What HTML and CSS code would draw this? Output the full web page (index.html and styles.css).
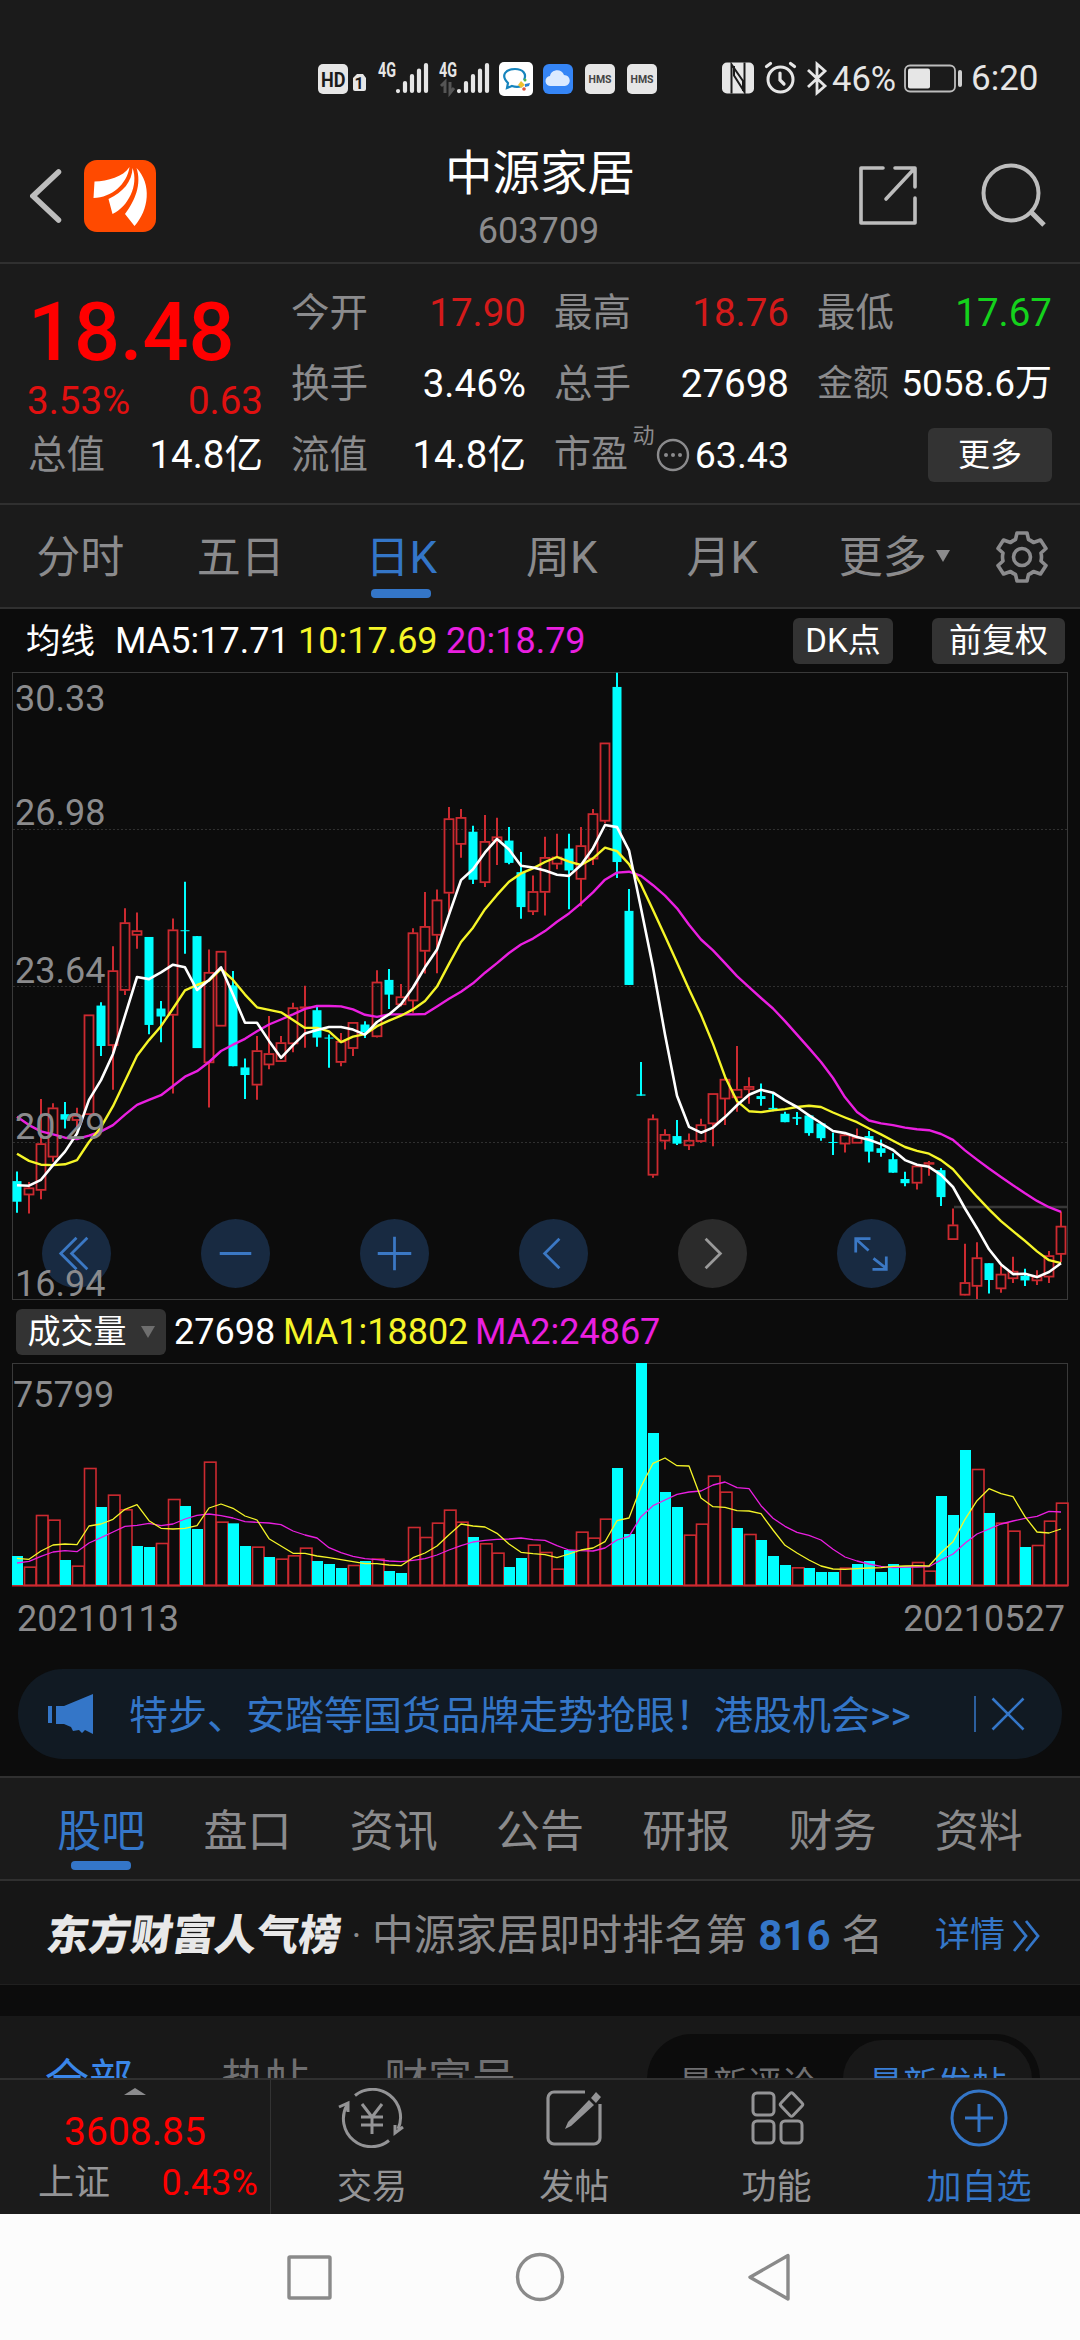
FILE: index.html
```html
<!DOCTYPE html>
<html lang="zh-CN">
<head>
<meta charset="utf-8">
<title>中源家居 603709</title>
<link rel="stylesheet" href="styles.css">
</head>
<body>
<div class="screen">

  <div class="status">
    <svg class="status-left" width="340" height="36" viewBox="318 61 340 36">
      <rect x="318" y="64" width="30" height="30" rx="5" fill="#e6e6e6"/>
      <text x="321" y="86.500" font-size="20" font-weight="700" fill="#1b1b1b" textLength="24.500" lengthAdjust="spacingAndGlyphs">HD</text>
      <path d="M357 74h6l3 4v11a2 2 0 0 1-2 2h-9a2 2 0 0 1-2-2V78z" fill="#e6e6e6"/>
      <text x="359" y="88.500" font-size="16" font-weight="700" fill="#1b1b1b" text-anchor="middle">1</text>
      <g fill="#e6e6e6" font-size="20" font-weight="700">
        <text x="378" y="77" textLength="18" lengthAdjust="spacingAndGlyphs">4G</text>
        <text x="439" y="77" textLength="18" lengthAdjust="spacingAndGlyphs">4G</text>
      </g>
      <g stroke="#e6e6e6" stroke-width="4.200" stroke-linecap="round">
        <path d="M398 91v.1M405 83v8M412 76v15M419 70.500v20.500M426 65v26"/>
        <path d="M459 91v.1M466 83v8M473 76v15M480 70.500v20.500M487 65v26"/>
      </g>
      <path d="M441 86l4-4v11M450 82v11l4-5" stroke="#555" stroke-width="3" fill="none"/>
      <rect x="499" y="62" width="34" height="34" rx="5" fill="#fff"/>
      <path d="M522 86c-3 1-7 1-10 0l-5 2 1-5c-8-8-2-14 7-14 8 0 12 5 9 11" fill="none" stroke="#1684bd" stroke-width="2.200"/>
      <path d="M521 81l4 4-4 3-3-3z" fill="#f2c12e"/><path d="M525 84l5-1-1 3-4 1z" fill="#2b7fd0"/><circle cx="524" cy="89" r="1.800" fill="#e0533a"/><circle cx="525" cy="80" r="1.500" fill="#4fb54b"/>
      <rect x="543" y="64" width="30" height="30" rx="6" fill="#3585f6"/>
      <path d="M551 86a5 5 0 0 1-1-10c1-7 12-8 14-1 7 0 8 10 1 11z" fill="#dbeaff"/>
      <rect x="585" y="64" width="30" height="30" rx="5" fill="#e6e6e6"/>
      <rect x="627" y="64" width="30" height="30" rx="5" fill="#e6e6e6"/>
      <g font-size="10" font-weight="700" fill="#444">
        <text x="588.500" y="82.500" textLength="23" lengthAdjust="spacingAndGlyphs">HMS</text>
        <text x="630.500" y="82.500" textLength="23" lengthAdjust="spacingAndGlyphs">HMS</text>
      </g>
    </svg>
    <svg class="status-mid" width="108" height="36" viewBox="721 61 108 36">
      <path d="M727 62.500h22a5 5 0 0 1 5 5v21a5 5 0 0 1-5 5h-22a5 5 0 0 1-5-5v-21a5 5 0 0 1 5-5z" fill="#e6e6e6"/>
      <path d="M731.500 93.500V64.500L743 81v10M744.500 62.500V92L734 75.500V66" stroke="#1b1b1b" stroke-width="2" fill="none"/>
      <circle cx="780.500" cy="79.500" r="12.500" fill="none" stroke="#e6e6e6" stroke-width="3"/>
      <path d="M780 73v7l4 4M766.500 66.500l4-3M794.500 66.500l-4-3" stroke="#e6e6e6" stroke-width="3.200" fill="none" stroke-linecap="round"/>
      <path d="M808 70l17 16-8 7V64l8 7-17 16" stroke="#e6e6e6" stroke-width="2.800" fill="none"/>
    </svg>
    <span class="battery-text">46%</span>
    <svg class="battery" width="60" height="36" viewBox="903 61 60 36">
      <rect x="905" y="65.500" width="50" height="26" rx="5" fill="none" stroke="#bdbdbd" stroke-width="1.800"/>
      <rect x="908" y="68.500" width="22" height="20" rx="2" fill="#e6e6e6"/>
      <path d="M960 72v13" stroke="#d0d0d0" stroke-width="4" stroke-linecap="round"/>
    </svg>
    <span class="clock">6:20</span>
  </div>

  <header class="header">
    <div class="header-side">
      <svg width="32" height="56" viewBox="30 168 32 56"><path d="M58.500 172L33 196l25.500 24" fill="none" stroke="#bdbdbd" stroke-width="5.500" stroke-linecap="round"/></svg>
      <svg class="app-logo" width="72" height="72" viewBox="0 0 72 72">
        <rect width="72" height="72" rx="13" fill="#ff4a00"/>
        <path d="M45.500 7C39 17 24 21 10.500 21.500L9.500 38C28 37.500 43 24 45.500 7z" fill="#fff"/>
        <path d="M48.500 8C48 22 39 32 24.500 39L28.500 54C44 47 55 25 48.500 8z" fill="#fff"/>
        <path d="M52.500 8C58 24 51 41 41 54L50.500 66C65 50 68 24 52.500 8z" fill="#fff"/>
      </svg>
    </div>
    <div class="title">
      <h1>中源家居</h1>
      <p>603709</p>
    </div>
    <div class="header-side header-actions">
      <svg width="62" height="62" viewBox="0 0 62 62"><path d="M25 3H3V58H57V33M37 3H57V22M56 4L28 34" fill="none" stroke="#bdbdbd" stroke-width="3.600" stroke-linejoin="round" stroke-linecap="round"/></svg>
      <svg width="68" height="68" viewBox="0 0 68 68"><circle cx="31" cy="31" r="27.500" fill="none" stroke="#bdbdbd" stroke-width="4"/><path d="M51 50l13 13" stroke="#bdbdbd" stroke-width="5"/></svg>
    </div>
  </header>

  <section class="quote">
    <div class="price-block">
      <div class="price">18.48</div>
      <div class="change"><span>3.53%</span><span>0.63</span></div>
    </div>
    <div class="cell"><label>今开</label><b class="up">17.90</b></div>
    <div class="cell"><label>最高</label><b class="up">18.76</b></div>
    <div class="cell"><label>最低</label><b class="down">17.67</b></div>
    <div class="cell"><label>换手</label><b>3.46%</b></div>
    <div class="cell"><label>总手</label><b>27698</b></div>
    <div class="cell tight"><label>金额</label><b>5058.6万</b></div>
    <div class="cell"><label>总值</label><b>14.8亿</b></div>
    <div class="cell"><label>流值</label><b>14.8亿</b></div>
    <div class="cell pe"><label>市盈</label><sup>动</sup>
      <svg width="34" height="34" viewBox="0 0 34 34"><circle cx="17" cy="17" r="15" fill="none" stroke="#8b8b8d" stroke-width="2.400"/><g fill="#8b8b8d"><circle cx="10" cy="17" r="2"/><circle cx="17" cy="17" r="2"/><circle cx="24" cy="17" r="2"/></g></svg>
      <b>63.43</b></div>
    <div class="cell end"><span class="btn more">更多</span></div>
  </section>

  <nav class="periods">
    <span>分时</span><span>五日</span><span class="on">日K</span><span>周K</span><span>月K</span>
    <span class="drop">更多<i class="caret"></i></span>
    <svg width="54" height="54" viewBox="-27 -27 54 54" fill="none" stroke="#8b8b8d" stroke-width="3.600" stroke-linejoin="round">
      <path d="M-5 -24H5L6.500 -17.500Q9 -16.500 11.500 -14.500L18.500 -17L24 -8.500L19 -4Q20 0 19 4L24 8.500L18.500 17L11.500 14.500Q9 16.500 6.500 17.500L5 24H-5L-6.500 17.500Q-9 16.500 -11.500 14.500L-18.500 17L-24 8.500L-19 4Q-20 0 -19 -4L-24 -8.500L-18.500 -17L-11.500 -14.500Q-9 -16.500 -6.500 -17.500Z"/><circle r="8.500"/>
    </svg>
  </nav>

  <div class="legend">
    <span class="name">均线</span><span class="ma5">MA5:17.71</span><span class="yellow">10:17.69</span><span class="magenta">20:18.79</span>
    <span class="btn dk">DK点</span><span class="btn adj">前复权</span>
  </div>

  <div class="chart">
    <div class="tools">
      <i><svg viewBox="0 0 70 70"><path d="M35 19L19 35l16 16M46 19L30 35l16 16"/></svg></i>
      <i><svg viewBox="0 0 70 70"><path d="M19 35h32"/></svg></i>
      <i><svg viewBox="0 0 70 70"><path d="M18 35h34M35 18v34"/></svg></i>
      <i><svg viewBox="0 0 70 70"><path d="M41 20L26 35l15 15"/></svg></i>
      <i class="off"><svg viewBox="0 0 70 70"><path d="M28 20l15 15-15 15"/></svg></i>
      <i><svg viewBox="0 0 70 70"><path d="M19 34V20H34M20 21L32 32M50 38V51H36M50 50L37 40"/></svg></i>
    </div>
    <svg id="kline" width="1080" height="628" viewBox="0 672 1080 628"></svg>
  </div>

  <div class="legend vol-legend">
    <span class="btn pick">成交量<i class="caret"></i></span><span class="v">27698</span><span class="yellow">MA1:18802</span><span class="magenta">MA2:24867</span>
  </div>
  <svg id="volume" class="volume" width="1080" height="224" viewBox="0 1363 1080 224"></svg>
  <div class="dates"><span>20210113</span><span>20210527</span></div>

  <div class="banner">
    <svg width="46" height="42" viewBox="0 0 46 42" fill="#3476c8"><path d="M0 13h4v17H0zM8 13h8L45 1v40l-8-4-3 3-3-3-6 1-2-4-7-3H8z"/></svg>
    <span class="banner-text">特步、安踏等国货品牌走势抢眼！港股机会&gt;&gt;</span>
    <i class="bar"></i>
    <svg class="close" width="34" height="34" viewBox="0 0 34 34"><path d="M1.500 1.500l31 31M32.500 1.500l-31 31" stroke="#3476c8" stroke-width="2.600"/></svg>
  </div>

  <nav class="sections">
    <span class="on">股吧</span><span>盘口</span><span>资讯</span><span>公告</span><span>研报</span><span>财务</span><span>资料</span>
  </nav>

  <div class="rank">
    <span class="brand">东方财富人气榜</span><span class="dot">·</span><span class="desc">中源家居即时排名第</span><span class="num">816</span><span class="desc">名</span>
    <span class="detail">详情</span>
    <svg width="30" height="34" viewBox="0 0 30 34"><path d="M2 2l12 15L2 32M14 2l12 15-12 15" fill="none" stroke="#3476c8" stroke-width="2.800"/></svg>
  </div>

  <div class="posts">
    <span class="on">全部</span><span>热帖</span><span>财富号</span>
    <div class="sort"><span>最新评论</span><span class="on">最新发帖</span></div>
  </div>

  <footer class="bottom">
    <div class="index">
      <i class="caret-up"></i>
      <div class="idx">3608.85</div>
      <div class="idx-row"><label>上证</label><span>0.43%</span></div>
    </div>
    <div class="act">
      <svg width="68" height="60" viewBox="-34 -30 68 60" fill="none" stroke="#949496" stroke-width="3"><path d="M-17 -22.500A28 28 0 0 1 26 11M31 9L23 15V7M17 22.500A28 28 0 0 1 -25 -13M-33 -11L-24 -15V-6"/><path d="M-10 -14L0 -1L10 -14M0 -1V16M-11 -1H11M-11 7H11"/></svg>
      <span>交易</span></div>
    <div class="act">
      <svg width="60" height="60" viewBox="-30 -30 60 60" fill="none" stroke="#949496" stroke-width="3.200"><path d="M11 -26H-20A6 6 0 0 0 -26 -20V20A6 6 0 0 0 -20 26H20A6 6 0 0 0 26 20V-14"/><path d="M22 -26l5 5-5 6-5-5zM15 -18l5 5L-3 8l-6 3 3-7z" fill="#949496" stroke="none"/></svg>
      <span>发帖</span></div>
    <div class="act">
      <svg width="60" height="60" viewBox="-30 -30 60 60" fill="none" stroke="#949496" stroke-width="3"><rect x="-24" y="-25" width="21" height="22" rx="4"/><rect x="-24" y="3" width="21" height="22" rx="4"/><rect x="4" y="3" width="21" height="22" rx="4"/><path d="M13 -24.500Q14.500 -26 16 -24.500L25 -15Q26.500 -13.500 25 -12L16 -2.500Q14.500 -1 13 -2.500L4 -12Q2.500 -13.500 4 -15Z"/></svg>
      <span>功能</span></div>
    <div class="act on">
      <svg width="60" height="60" viewBox="-30 -30 60 60" fill="none" stroke="#3476c8" stroke-width="3"><circle r="27"/><path d="M-14 0H14M0 -14V14"/></svg>
      <span>加自选</span></div>
  </footer>

  <div class="sysnav">
    <svg width="1080" height="126" viewBox="0 2214 1080 126" fill="none" stroke="#8a8a8a" stroke-width="3.400" stroke-linejoin="round"><rect x="289" y="2257" width="41" height="41" rx="1"/><circle cx="540" cy="2277" r="22.500"/><path d="M788 2255.500V2299L750 2277.200Z"/></svg>
  </div>
</div>
<script src="chart.js"></script>
</body>
</html>
```
FILE: chart.js
```js
// One trading day every 12px, starting at x = 17.
const STEP = 12, FIRST = 17;
const RED = '#cc2a30', CYAN = '#00ffff', YELLOW = '#f5f528', MAGENTA = '#ea1fe0';

// type, high, body top, body bottom, low
const candles = `c 1215 1238 1287 1313|r 1240 1254 1271 1315|r 1043 1149 1260 1281|r 1053 1064 1181 1192|c 1050 1079 1092 1113|r 1064 1082 1094 1110|r 843 843 1080 1080|c 813 821 917 941|r 680 738 916 1021|r 590 624 785 796|r 600 643 654 686|c 658 658 867 889|c 810 828 847 908|r 614 641 844 1030|c 527 642 644 698|c 656 656 922 922|r 688 742 957 1063|r 692 692 870 870|c 739 773 965 965|c 947 968 986 1043|r 893 928 1010 1045|r 846 935 962 972|r 893 909 954 954|r 814 826 912 932|r 774 824 826 921|c 822 832 897 919|c 890 897 899 969|r 886 906 956 965|r 861 861 923 941|c 858 866 884 898|r 737 765 895 897|c 734 760 795 829|r 770 800 819 823|r 637 648 810 838|r 551 633 692 745|r 545 570 654 744|r 349 377 554 600|r 354 374 438 470|c 394 408 522 532|r 368 431 529 539|r 375 420 430 487|c 397 429 482 485|c 456 504 587 615|r 512 550 598 606|r 420 469 552 607|r 413 468 485 497|c 413 448 500 592|r 397 441 521 585|r 354 365 473 487|r 197 197 383 388|c 30 64 480 518|c 544 596 772 772|c 955 1032 1035 1035|r 1080 1090 1224 1230|r 1115 1127 1143 1163|c 1093 1131 1149 1152|r 1125 1141 1154 1164|r 1090 1104 1144 1147|r 1030 1030 1102 1155|r 990 996 1043 1105|r 917 1020 1040 1073|r 991 1013 1021 1054|c 1006 1036 1043 1059|c 1030 1064 1068 1072|c 1073 1078 1098 1098|c 1074 1086 1090 1105|c 1080 1082 1124 1130|c 1100 1101 1136 1142|c 1123 1145 1147 1176|r 1125 1128 1150 1170|r 1113 1134 1148 1148|c 1119 1131 1168 1194|c 1139 1160 1171 1180|c 1172 1186 1218 1218|c 1216 1233 1243 1250|r 1202 1202 1243 1258|r 1190 1194 1198 1225|c 1207 1212 1276 1297|r 1303 1342 1377 1378|r 1387 1479 1509 1510|r 1383 1420 1488 1518|c 1433 1433 1473 1505|r 1440 1459 1494 1503|r 1418 1452 1470 1480|c 1446 1463 1474 1487|r 1450 1465 1475 1485|r 1404 1415 1466 1480|r 1310 1345 1412 1430`
  .split('|').map(s => { const [t, ...v] = s.split(' '); return { t, v: v.map(Number) }; });

const ma5 = [1248,1249,1235,1200,1168,1125,1045,998,936,845,753,758,742,724,730,784,760,730,795,862,862,905,945,915,887,879,872,872,878,890,860,842,818,778,730,688,605,523,497,457,425,450,489,493,500,510,513,487,447,392,397,452,590,730,890,1035,1109,1123,1111,1086,1058,1033,1021,1028,1046,1062,1082,1100,1119,1124,1133,1140,1150,1164,1188,1199,1204,1223,1252,1303,1350,1400,1436,1459,1458,1466,1454,1433];
const ma10 = [1173,1190,1199,1200,1198,1188,1145,1110,1060,1000,940,903,870,828,785,772,762,734,760,795,825,831,837,855,874,874,882,908,895,889,870,857,845,830,810,776,722,670,636,592,558,527,507,495,480,468,479,487,471,446,454,485,533,594,656,719,782,843,912,990,1048,1072,1074,1070,1067,1062,1059,1062,1075,1087,1098,1113,1127,1142,1157,1166,1173,1188,1210,1243,1275,1305,1333,1357,1380,1405,1426,1433];
const ma20 = [1085,1105,1120,1127,1135,1138,1130,1120,1105,1080,1057,1045,1034,1012,990,977,955,929,914,900,882,866,854,842,829,822,822,823,830,843,848,842,842,842,841,823,805,788,768,743,720,696,676,662,644,622,602,578,552,522,505,503,513,535,560,590,629,664,690,720,751,777,803,828,858,890,922,955,993,1039,1074,1094,1101,1105,1111,1115,1117,1126,1140,1165,1187,1208,1228,1248,1267,1285,1300,1311];

const volumes = 'c768 r800 r645 r659 c780 r797 r504 c621 r584 r628 c738 c741 r729 r597 c618 c687 r485 r665 c670 c738 r740 c771 r776 r766 r743 c783 c792 c804 r795 c783 r776 c813 c819 r681 r711 r668 r629 r665 c711 r730 r758 c801 c774 r734 r756 r806 c750 r695 r713 r656 c504 c702 c189 c399 c576 c621 r704 r671 r527 r575 c684 r702 c720 c768 c795 r802 c804 c816 c816 r803 c792 c783 c816 c792 c798 r786 r812 c588 c645 c450 r507 c639 r668 r692 c741 r735 r662 r608'.split(' ');
const vma1 = [775,778,753,735,732,734,678,672,658,628,614,662,685,687,685,677,624,612,625,648,660,716,738,760,760,768,773,779,785,791,791,795,797,773,759,738,704,672,678,681,700,732,757,761,764,773,762,750,744,725,662,654,560,490,474,497,498,594,620,622,632,633,641,690,736,759,780,798,807,808,806,804,803,799,798,797,798,758,725,658,602,566,581,590,650,696,699,687];
const vma2 = [789,784,769,756,752,755,729,713,696,679,676,670,677,672,657,646,642,647,654,665,667,669,674,693,705,714,743,758,769,776,779,783,785,781,776,765,750,737,726,721,718,717,714,719,721,737,750,752,753,744,720,709,650,617,600,583,576,573,555,546,563,566,617,655,679,697,706,720,748,771,783,792,799,803,801,801,800,780,762,730,702,687,672,663,655,649,634,636];

const py = v => 660 + v * 0.42092;
const vy = v => 1300 + v / 3;
const x = i => FIRST + i * STEP;
const line = (d, f, color, w) =>
  `<polyline points="${d.map((v, i) => x(i) + ',' + f(v).toFixed(1)).join(' ')}" fill="none" stroke="${color}" stroke-width="${w}" stroke-linejoin="round"/>`;
const label = (px, base, text) => `<text x="${px}" y="${base}" class="axis">${text}</text>`;

let k = '<rect x="12.500" y="672.500" width="1055" height="627" fill="none" stroke="#3a3a3a"/>';
for (const g of [829.500, 986.500, 1142.500])
  k += `<path d="M13 ${g}H1067" stroke="#303030" stroke-dasharray="2 2"/>`;
k += '<path d="M954 1207H1067" stroke="#383838" stroke-width="2.500"/>';
candles.forEach(({ t, v }, i) => {
  const [h, a, b, l] = v.map(py), cx = x(i);
  if (t === 'c') {
    k += `<path d="M${cx} ${h}V${l}" stroke="${CYAN}" stroke-width="2"/><rect x="${cx - 4.500}" y="${a}" width="9" height="${Math.max(1, b - a)}" fill="${CYAN}"/>`;
  } else {
    k += `<path d="M${cx} ${h}V${a}M${cx} ${b}V${l}" stroke="${RED}" stroke-width="2"/><rect x="${cx - 4.500}" y="${a + .5}" width="9" height="${Math.max(.5, b - a - 1)}" fill="none" stroke="${RED}" stroke-width="1.800"/>`;
  }
});
k += line(ma20, py, MAGENTA, 2.4) + line(ma10, py, YELLOW, 2.4) + line(ma5, py, '#fff', 2.6);
k += label(15, 711, '30.33') + label(15, 825, '26.98') + label(15, 982.500, '23.64') + label(15, 1139, '20.29') + label(15, 1296, '16.94');
document.getElementById('kline').innerHTML = k;

let s = '<rect x="12.500" y="1363.500" width="1055" height="222" fill="none" stroke="#3a3a3a"/><path d="M12 1585.500H1068" stroke="#c3262c" stroke-width="1.800"/>';
volumes.forEach((d, i) => {
  const top = vy(+d.slice(1)), cx = x(i);
  s += d[0] === 'c'
    ? `<rect x="${cx - 5}" y="${top}" width="11" height="${1585 - top}" fill="${CYAN}"/>`
    : `<rect x="${cx - 4.500}" y="${top + .5}" width="11.500" height="${1585 - top}" fill="none" stroke="${RED}" stroke-width="1.600"/>`;
});
s += line(vma2, vy, MAGENTA, 1.3) + line(vma1, vy, YELLOW, 1.3) + label(13, 1407, '75799');
document.getElementById('volume').innerHTML = s;
```
FILE: styles.css
```css
* { box-sizing: border-box; margin: 0; padding: 0; }
body { background: #0c0c0c; font-family: Roboto, "Noto Sans CJK SC", sans-serif; }
i { font-style: normal; }
svg { display: block; flex: none; }
.screen { width: 1080px; height: 2340px; overflow: hidden; color: #fff; white-space: nowrap; display: flex; flex-direction: column; }
.screen > * { flex: none; }

.status { height: 130px; padding: 61px 0 0 318px; display: flex; align-items: flex-start; background: #1b1b1b; color: #e6e6e6; font-size: 35px; line-height: 36px; }
.status-left { overflow: visible; }
.status-mid { margin-left: 63px; }
.battery-text { width: 62px; margin-left: 3px; font-size: 34.500px; }
.battery { margin-left: 9px; }
.clock { margin-left: 8px; }

.header { height: 134px; padding: 0 32px 0 30px; display: flex; justify-content: space-between; background: #1b1b1b; border-bottom: 2px solid #303030; }
.header-side { width: 190px; height: 132px; display: flex; align-items: center; }
.app-logo { margin-left: 22px; }
.header-actions { justify-content: flex-end; gap: 60px; }
.title { text-align: center; margin-right: -2px; }
.title h1 { margin-top: 14px; font-size: 47.500px; font-weight: 400; line-height: 60px; }
.title p { margin-top: 7px; margin-left: -3px; color: #8b8b8d; font-size: 36px; line-height: 40px; }

.quote { height: 239px; padding: 13px 28px 0 28px; display: grid; grid-template-columns: repeat(4, 1fr); grid-template-rows: repeat(3, 71px); column-gap: 28px; background: #1b1b1b; }
.price-block { grid-row: span 2; color: #f00; }
.price { padding-left: 0; margin-top: 12px; font-size: 81px; font-weight: 500; line-height: 88px; }
.change { display: flex; justify-content: space-between; margin-top: 4px; margin-left: -1px; font-size: 38.500px; line-height: 40px; color: #e01010; }
.cell { display: flex; align-items: center; justify-content: space-between; font-size: 38.500px; line-height: 60px; }
.cell label { color: #8b8b8d; }
.cell b { font-weight: 400; font-size: 38.500px; }
.cell .up { color: #d41a1a; }
.cell .down { color: #14d21c; }
.tight { font-size: 36px; }
.cell.tight b { font-size: 37px; }
.pe { font-size: 37px; }
.pe sup { font-size: 22px; line-height: 24px; color: #8b8b8d; align-self: flex-start; margin-top: 5px; }
.pe svg { margin-left: -3px; }
.cell.pe b { font-size: 37.500px; }
.end { justify-content: flex-end; }
.btn { display: flex; align-items: center; justify-content: center; background: #333; border-radius: 6px; color: #fff; }
.more { width: 124px; height: 54px; font-size: 32px; }

.periods { height: 106px; padding-right: 30px; display: flex; align-items: center; background: #1b1b1b; border-top: 2px solid #303030; border-bottom: 2px solid #303030; color: #8b8b8d; font-size: 44px; }
.periods span { width: 160.500px; height: 102px; line-height: 107px; text-align: center; position: relative; }
.periods .on, .sections .on { color: #3476c8; }
.periods svg { margin: 1px 0 0 32px; }
.on { position: relative; }
.periods .on::after, .sections .on::after { content: ""; position: absolute; left: 50%; bottom: 9px; width: 60px; height: 9px; margin-left: -30px; border-radius: 4px; background: #3476c8; }
.caret { border: 7px solid transparent; border-top: 12px solid #8b8b8d; border-bottom: 0; }
.drop .caret { position: absolute; left: 133px; top: 45px; }

.legend { height: 63px; padding: 0 15px 0 26px; display: flex; align-items: center; font-size: 36px; line-height: 44px; }
.name { width: 89px; font-size: 34.500px; }
.ma5 { width: 183px; }
.legend .yellow { width: 148px; color: #f5f528; }
.legend .magenta { color: #ea1fe0; }
.dk { width: 100px; height: 46px; margin-left: auto; font-size: 33px; }
.adj { width: 133px; height: 46px; margin-left: 39px; font-size: 33px; }

.chart { position: relative; height: 628px; }
#kline { position: relative; }
.tools { position: absolute; left: 42px; top: 547px; display: flex; gap: 90px; }
.tools i { width: 69px; height: 69px; border-radius: 50%; background: #182a41; }
.tools svg { width: 69px; height: 69px; fill: none; stroke: #3b78c4; stroke-width: 2.800; }
.tools .off { background: #2b2b2b; }
.tools .off svg { stroke: #9a9a9a; }
.axis { font-family: Roboto, sans-serif; font-size: 36px; fill: #8b8b8d; }

.vol-legend { padding-left: 16px; }
.pick { width: 150px; height: 46px; font-size: 33px; gap: 14px; }
.pick .caret { border-top-color: #6e6e6e; }
.v { margin-left: 8px; width: 109px; }
.vol-legend .yellow { width: 192px; }
.dates { height: 64px; padding: 0 15px 0 17px; display: flex; justify-content: space-between; align-items: center; color: #8b8b8d; font-size: 36px; }

.banner { height: 90px; margin: 18px 18px 17px; padding: 0 37px 0 30px; display: flex; align-items: center; background: #111a23; border-radius: 45px; color: #3476c8; font-size: 39px; line-height: 60px; }
.banner-text { margin-left: 35px; margin-top: 3px; }
.bar { width: 2px; height: 36px; margin-left: auto; background: #2c5f9e; }
.close { margin-left: 15px; }

.sections { height: 105px; padding: 0 28px; display: flex; background: #1b1b1b; border-top: 2px solid #303030; border-bottom: 2px solid #303030; color: #8b8b8d; font-size: 44px; line-height: 108px; }
.sections span { width: 146.300px; text-align: center; }

.rank { height: 104px; padding: 6px 38px 0 47px; display: flex; align-items: center; background: #161616; border-bottom: 1px solid #202020; line-height: 60px; }
.brand { width: 294px; font-size: 42px; font-weight: 900; color: #e8e8e8; transform: skewX(-8deg); }
.dot { width: 31px; text-align: center; color: #8b8b8d; font-size: 36px; }
.desc { color: #8b8b8d; font-size: 41.700px; }
.num { margin: 0 11px; color: #3476c8; font-size: 42px; font-weight: 700; }
.detail { margin-left: auto; margin-right: 7px; color: #3476c8; font-size: 35px; }

.posts { height: 62px; margin-top: 31px; padding-left: 45px; display: flex; overflow: hidden; background: #181818; color: #6f6f71; font-size: 44px; line-height: 130px; }
.posts > span { margin-right: 88px; }
.posts > span + span { margin-right: 75px; }
.posts > .on { color: #3a86e8; }
.sort { width: 393px; height: 90px; margin: 18px 0 0 56px; padding: 6px 8px 6px 0; display: flex; justify-content: flex-end; border-radius: 45px; background: #0c0c0c; font-size: 34.500px; line-height: 88px; }
.sort span { width: 189px; height: 78px; text-align: center; }
.sort span:first-child { padding-right: 2px; }
.sort .on { border-radius: 40px; background: #181818; color: #3a7fd5; }

.bottom { height: 136px; display: flex; background: #1b1b1b; border-top: 2px solid #303030; }
.index { width: 271px; border-right: 1px solid #333; display: flex; flex-direction: column; align-items: center; color: #f00; }
.caret-up { margin-top: 8px; border: 11px solid transparent; border-bottom: 7px solid #8b8b8d; border-top: 0; }
.idx { margin-top: 14px; font-size: 39px; line-height: 46px; }
.idx-row { width: 100%; margin-top: 4px; padding: 0 12px 0 38px; display: flex; justify-content: space-between; font-size: 36px; line-height: 48px; }
.idx-row label { color: #949496; }
.act { width: 202.300px; display: flex; flex-direction: column; align-items: center; color: #949496; font-size: 35px; line-height: 44px; }
.act svg { margin: 8px 0 18px; }
.act.on { color: #3476c8; }
.sysnav { height: 126px; background: #fcfcfc; }
```
